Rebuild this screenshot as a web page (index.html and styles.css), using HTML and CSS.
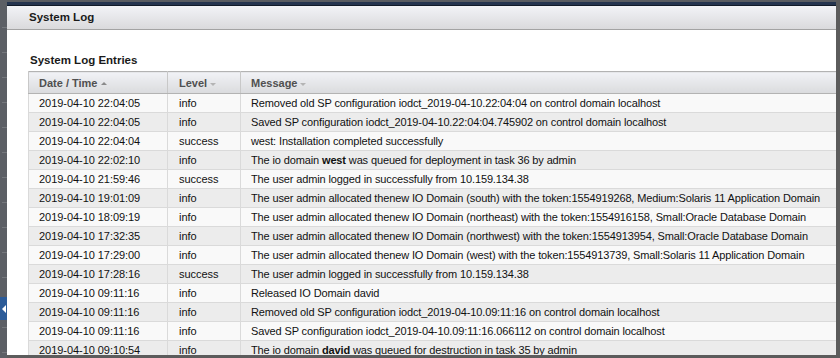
FILE: index.html
```html
<!DOCTYPE html>
<html>
<head>
<meta charset="utf-8">
<link rel="stylesheet" href="styles.css">
</head>
<body>
<div class="frame">
  <div class="sidebar">
    <div class="tab"><span class="tab-arrow"></span></div>
  </div>
  <div class="main">
    <div class="topbar"></div>
    <div class="panel-head">System Log</div>
    <div class="content">
      <div class="section-title">System Log Entries</div>
      <table class="log">
        <colgroup><col class="c-date"><col class="c-level"><col class="c-msg"></colgroup>
        <thead>
          <tr>
            <th>Date / Time<span class="sort up"></span></th>
            <th>Level<span class="sort down"></span></th>
            <th>Message<span class="sort down"></span></th>
          </tr>
        </thead>
        <tbody>
          <tr><td>2019-04-10 22:04:05</td><td>info</td><td class="msg">Removed old SP configuration iodct_2019-04-10.22:04:04 on control domain localhost</td></tr>
          <tr><td>2019-04-10 22:04:05</td><td>info</td><td class="msg">Saved SP configuration iodct_2019-04-10.22:04:04.745902 on control domain localhost</td></tr>
          <tr><td>2019-04-10 22:04:04</td><td>success</td><td class="msg">west: Installation completed successfully</td></tr>
          <tr><td>2019-04-10 22:02:10</td><td>info</td><td class="msg">The io domain <b>west</b> was queued for deployment in task 36 by admin</td></tr>
          <tr><td>2019-04-10 21:59:46</td><td>success</td><td class="msg">The user admin logged in successfully from 10.159.134.38</td></tr>
          <tr><td>2019-04-10 19:01:09</td><td>info</td><td class="msg">The user admin allocated thenew IO Domain (south) with the token:1554919268, Medium:Solaris 11 Application Domain</td></tr>
          <tr><td>2019-04-10 18:09:19</td><td>info</td><td class="msg">The user admin allocated thenew IO Domain (northeast) with the token:1554916158, Small:Oracle Database Domain</td></tr>
          <tr><td>2019-04-10 17:32:35</td><td>info</td><td class="msg">The user admin allocated thenew IO Domain (northwest) with the token:1554913954, Small:Oracle Database Domain</td></tr>
          <tr><td>2019-04-10 17:29:00</td><td>info</td><td class="msg">The user admin allocated thenew IO Domain (west) with the token:1554913739, Small:Solaris 11 Application Domain</td></tr>
          <tr><td>2019-04-10 17:28:16</td><td>success</td><td class="msg">The user admin logged in successfully from 10.159.134.38</td></tr>
          <tr><td>2019-04-10 09:11:16</td><td>info</td><td class="msg">Released IO Domain david</td></tr>
          <tr><td>2019-04-10 09:11:16</td><td>info</td><td class="msg">Removed old SP configuration iodct_2019-04-10.09:11:16 on control domain localhost</td></tr>
          <tr><td>2019-04-10 09:11:16</td><td>info</td><td class="msg">Saved SP configuration iodct_2019-04-10.09:11:16.066112 on control domain localhost</td></tr>
          <tr><td>2019-04-10 09:10:54</td><td>info</td><td class="msg">The io domain <b>david</b> was queued for destruction in task 35 by admin</td></tr>
        </tbody>
      </table>
    </div>
  </div>
</div>
</body>
</html>
```

FILE: styles.css
```css
html, body {
  margin: 0;
  padding: 0;
  width: 840px;
  height: 358px;
  overflow: hidden;
  background: #5a5a5a;
  font-family: "Liberation Sans", Arial, sans-serif;
}

.frame {
  display: flex;
  width: 840px;
  height: 358px;
}

.sidebar {
  width: 7px;
  flex: none;
  background-color: #5c5f65;
  background-image: repeating-linear-gradient(to bottom, transparent 0, transparent 24px, #74777c 24px, #74777c 25px);
  background-size: 5px 100%;
  background-position: 2px 3px;
  background-repeat: no-repeat;
  padding-top: 297px;
  box-sizing: border-box;
}

.tab {
  height: 23px;
  width: 7px;
  background: #2b5b99;
  display: flex;
  align-items: center;
  justify-content: center;
}

.tab-arrow {
  width: 0;
  height: 0;
  border-top: 4px solid transparent;
  border-bottom: 4px solid transparent;
  border-right: 4px solid #ffffff;
}

.main {
  flex: 1;
  display: flex;
  flex-direction: column;
  min-width: 0;
  overflow: hidden;
  border-right: 4px solid #5c5c5c;
  border-bottom: 3px solid #5c5c5c;
  background: #ffffff;
}

.topbar {
  height: 6px;
  flex: none;
  background: linear-gradient(to bottom, #595c61 0, #595c61 2px, #24344f 2px, #24344f 5px, #111a28 5px);
}

.panel-head {
  height: 24px;
  flex: none;
  box-sizing: border-box;
  border-bottom: 1px solid #a3a3a3;
  background: linear-gradient(to bottom, #f2f3f7, #dadadc);
  padding-left: 22px;
  font-size: 11.5px;
  font-weight: bold;
  color: #1a1a1a;
  line-height: 22px;
}

.content {
  flex: 1;
  padding: 0 0 0 21px;
}

.section-title {
  font-size: 11.5px;
  font-weight: bold;
  color: #1a1a1a;
  padding: 23px 0 0 2px;
  height: 18px;
  line-height: 14px;
}

.log {
  border-collapse: collapse;
  width: 840px;
  table-layout: fixed;
  font-size: 11px;
  border: 1px solid #b3b3b3;
}

.c-date { width: 139px; }
.c-level { width: 73px; }

.log th {
  height: 21px;
  padding: 0 0 0 10px;
  text-align: left;
  font-weight: bold;
  color: #505050;
  background: linear-gradient(to bottom, #f1f2f6, #dadbdd);
  border-left: 1px solid #c8c8c8;
  border-bottom: 1px solid #b3b3b3;
  white-space: nowrap;
}

.log td {
  height: 18px;
  padding: 0 0 0 10px;
  color: #111111;
  border-left: 1px solid #dadada;
  border-top: 1px solid #dadada;
  white-space: nowrap;
  overflow: hidden;
  letter-spacing: -0.05px;
}

.log td.msg { letter-spacing: -0.13px; }

.log td:nth-child(2), .log th:nth-child(2) { padding-left: 11px; }

.log tbody tr:nth-child(odd) td { background: #f9f9f9; }
.log tbody tr:nth-child(even) td { background: #ececec; }

.sort {
  display: inline-block;
  width: 0;
  height: 0;
  margin-left: 3px;
  vertical-align: 2px;
  border-left: 3px solid transparent;
  border-right: 3px solid transparent;
}

.sort.up { border-bottom: 3px solid #8a8a8a; }
.sort.down { border-top: 3px solid #b4b4b4; vertical-align: 1px; }
```
